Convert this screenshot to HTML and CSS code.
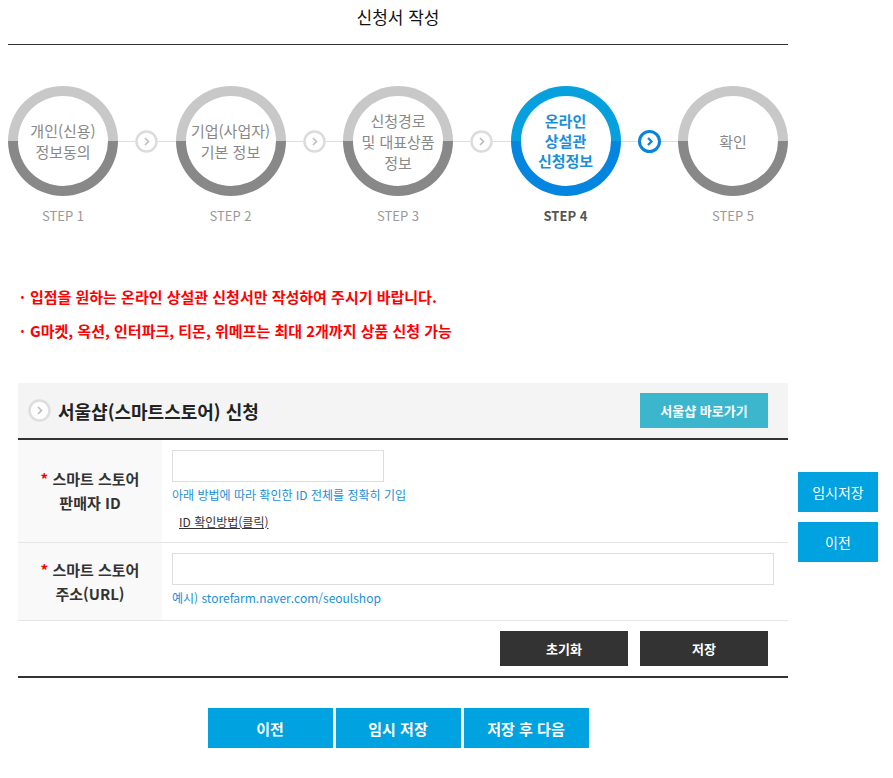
FILE: index.html
```html
<!DOCTYPE html>
<html lang="ko">
<head>
    <meta charset="UTF-8">
    <meta name="viewport" content="width=device-width, initial-scale=1.0">
    <title>신청서 작성</title>
    <link rel="stylesheet" href="styles.css">
</head>
<body>
    <div class="wrap">
        <h1 class="page-title">신청서 작성</h1>

        <!-- 단계 표시 -->
        <div class="steps">
            <div class="step">
                <div class="circle"><div class="circle-in">개인(신용)<br>정보동의</div></div>
                <p class="step-num">STEP 1</p>
            </div>
            <div class="link">
                <svg class="arrow" width="23" height="23" viewBox="0 0 23 23"><circle cx="11.5" cy="11.5" r="10" fill="#fff" stroke="#dcdcdc" stroke-width="2.5"/><polyline points="10,8 13.5,11.5 10,15" fill="none" stroke="#bbb" stroke-width="1.6"/></svg>
            </div>
            <div class="step">
                <div class="circle"><div class="circle-in">기업(사업자)<br>기본 정보</div></div>
                <p class="step-num">STEP 2</p>
            </div>
            <div class="link">
                <svg class="arrow" width="23" height="23" viewBox="0 0 23 23"><circle cx="11.5" cy="11.5" r="10" fill="#fff" stroke="#dcdcdc" stroke-width="2.5"/><polyline points="10,8 13.5,11.5 10,15" fill="none" stroke="#bbb" stroke-width="1.6"/></svg>
            </div>
            <div class="step">
                <div class="circle"><div class="circle-in">신청경로<br>및 대표상품<br>정보</div></div>
                <p class="step-num">STEP 3</p>
            </div>
            <div class="link">
                <svg class="arrow" width="23" height="23" viewBox="0 0 23 23"><circle cx="11.5" cy="11.5" r="10" fill="#fff" stroke="#dcdcdc" stroke-width="2.5"/><polyline points="10,8 13.5,11.5 10,15" fill="none" stroke="#bbb" stroke-width="1.6"/></svg>
            </div>
            <div class="step on">
                <div class="circle"><div class="circle-in">온라인<br>상설관<br>신청정보</div></div>
                <p class="step-num">STEP 4</p>
            </div>
            <div class="link">
                <svg class="arrow" width="23" height="23" viewBox="0 0 23 23"><circle cx="11.5" cy="11.5" r="10" fill="#fff" stroke="#0a83dc" stroke-width="3"/><polyline points="10,8 13.5,11.5 10,15" fill="none" stroke="#0a83dc" stroke-width="2.2"/></svg>
            </div>
            <div class="step">
                <div class="circle"><div class="circle-in">확인</div></div>
                <p class="step-num">STEP 5</p>
            </div>
        </div>

        <!-- 안내 문구 -->
        <ul class="notice">
            <li>입점을 원하는 온라인 상설관 신청서만 작성하여 주시기 바랍니다.</li>
            <li>G마켓, 옥션, 인터파크, 티몬, 위메프는 최대 2개까지 상품 신청 가능</li>
        </ul>

        <!-- 신청 영역 -->
        <div class="section">
            <div class="section-head">
                <svg class="head-icon" width="23" height="23" viewBox="0 0 23 23"><circle cx="11.5" cy="11.5" r="10" fill="#fff" stroke="#dedede" stroke-width="2.5"/><polyline points="10,8 13.5,11.5 10,15" fill="none" stroke="#bbb" stroke-width="1.6"/></svg>
                <h2>서울샵(스마트스토어) 신청</h2>
                <button class="btn-go">서울샵 바로가기</button>
            </div>

            <div class="row">
                <div class="row-label"><p><span class="req">*</span> 스마트 스토어<br>판매자 ID</p></div>
                <div class="row-field">
                    <input type="text" class="inp-short">
                    <p class="hint">아래 방법에 따라 확인한 ID 전체를 정확히 기입</p>
                    <a href="#" class="how">ID 확인방법(클릭)</a>
                </div>
            </div>
            <div class="row">
                <div class="row-label"><p><span class="req">*</span> 스마트 스토어<br>주소(URL)</p></div>
                <div class="row-field">
                    <input type="text" class="inp-long">
                    <p class="hint">예시) storefarm.naver.com/seoulshop</p>
                </div>
            </div>

            <div class="section-btns">
                <button class="btn-dark">초기화</button>
                <button class="btn-dark">저장</button>
            </div>
        </div>

        <div class="bottom-btns">
            <button class="btn-blue">이전</button>
            <button class="btn-blue">임시 저장</button>
            <button class="btn-blue">저장 후 다음</button>
        </div>

        <!-- 우측 고정 버튼 -->
        <div class="side-btns">
            <button class="btn-side">임시저장</button>
            <button class="btn-side">이전</button>
        </div>
    </div>
</body>
</html>
```

FILE: styles.css
```css
/* 기본 */
body {
    margin: 0;
    padding: 0;
    font-family: "Noto Sans CJK KR", "Noto Sans", sans-serif;
    color: #333;
    background-color: #fff;
}

.wrap {
    position: relative;
    width: 780px;
    padding-left: 8px;
    padding-bottom: 30px;
}

button {
    border: none;
    cursor: pointer;
    font-family: inherit;
    padding: 0;
}

/* 제목 */
.page-title {
    margin: 0;
    height: 45px;
    line-height: 34px;
    font-size: 17px;
    font-weight: normal;
    text-align: center;
    color: #111;
    border-bottom: 1px solid #333;
    box-sizing: border-box;
}

/* 단계 */
.steps {
    display: flex;
    margin-top: 41px;
}

.step {
    width: 110px;
    flex: none;
}

.circle {
    width: 110px;
    height: 110px;
    border-radius: 50%;
    padding: 10px;
    box-sizing: border-box;
    background: linear-gradient(#c8c8c8 50%, #888 50%);
}

.circle-in {
    width: 100%;
    height: 100%;
    border-radius: 50%;
    background-color: #fff;
    display: flex;
    align-items: center;
    justify-content: center;
    text-align: center;
    font-size: 15px;
    line-height: 21px;
    color: #888;
}

.step-num {
    margin: 10px 0 0;
    line-height: 20px;
    font-size: 13px;
    text-align: center;
    color: #999;
}

.step.on .circle {
    background: linear-gradient(#06a0de 50%, #0485e0 50%);
}

.step.on .circle-in {
    color: #1b8fd8;
    font-weight: bold;
    line-height: 20px;
}

.step.on .step-num {
    color: #555;
    font-weight: bold;
}

.link {
    flex: 1;
    height: 110px;
    display: flex;
    align-items: center;
}

.link::before,
.link::after {
    content: "";
    flex: 1;
    height: 1px;
    background-color: #ddd;
}

.arrow {
    display: block;
    flex: none;
}

/* 안내 문구 */
.notice {
    list-style: none;
    margin: 61px 0 0;
    padding: 0 0 0 12px;
}

.notice li {
    line-height: 20px;
    font-size: 15px;
    font-weight: bold;
    color: #f00;
    margin-bottom: 14px;
}

.notice li::before {
    content: "·";
    margin-right: 5px;
}

/* 신청 영역 */
.section {
    margin: 42px 0 0 10px;
    width: 770px;
    border-bottom: 2px solid #333;
}

.section-head {
    display: flex;
    align-items: center;
    height: 55px;
    padding: 0 20px 0 10px;
    background-color: #f4f4f4;
    border-bottom: 2px solid #333;
}

.head-icon {
    display: block;
    margin-right: 7px;
}

.section-head h2 {
    flex: 1;
    margin: 0;
    font-size: 18px;
    color: #222;
    line-height: 24px;
}

.btn-go {
    width: 128px;
    height: 35px;
    background-color: #3cb6cc;
    color: #fff;
    font-size: 13px;
    font-weight: bold;
}

.row {
    display: flex;
    border-bottom: 1px solid #e5e5e5;
}

.row-label {
    width: 144px;
    flex: none;
    background-color: #f9f9f9;
    display: flex;
    align-items: center;
    justify-content: center;
    text-align: center;
    font-size: 15px;
    font-weight: bold;
    line-height: 24px;
    color: #333;
}

.row-label p {
    margin: 0;
}

.req {
    color: #f00;
}

.row-field {
    flex: 1;
    padding: 10px 0 10px 10px;
}

.row + .row .row-field {
    padding-bottom: 13px;
}

.row-field input {
    display: block;
    height: 32px;
    border: 1px solid #ddd;
    box-sizing: border-box;
    margin: 0;
}

.inp-short {
    width: 212px;
}

.inp-long {
    width: 602px;
}

.hint {
    margin: 4px 0 0;
    line-height: 18px;
    font-size: 12px;
    color: #1a8fd8;
}

.how {
    display: inline-block;
    margin: 9px 0 0 7px;
    line-height: 18px;
    font-size: 12px;
    color: #333;
}

.section-btns {
    display: flex;
    justify-content: flex-end;
    gap: 12px;
    padding: 10px 20px 10px 0;
}

.btn-dark {
    width: 128px;
    height: 35px;
    background-color: #333;
    color: #fff;
    font-size: 13px;
    font-weight: bold;
}

/* 하단 버튼 */
.bottom-btns {
    display: flex;
    justify-content: center;
    gap: 3px;
    margin-top: 30px;
}

.btn-blue {
    width: 125px;
    height: 40px;
    background-color: #00a2df;
    color: #fff;
    font-size: 15px;
    font-weight: bold;
}

/* 우측 고정 버튼 */
.side-btns {
    position: absolute;
    left: 798px;
    top: 472px;
    display: flex;
    flex-direction: column;
    gap: 10px;
}

.btn-side {
    width: 80px;
    height: 40px;
    background-color: #00a2df;
    color: #fff;
    font-size: 14px;
}
```
